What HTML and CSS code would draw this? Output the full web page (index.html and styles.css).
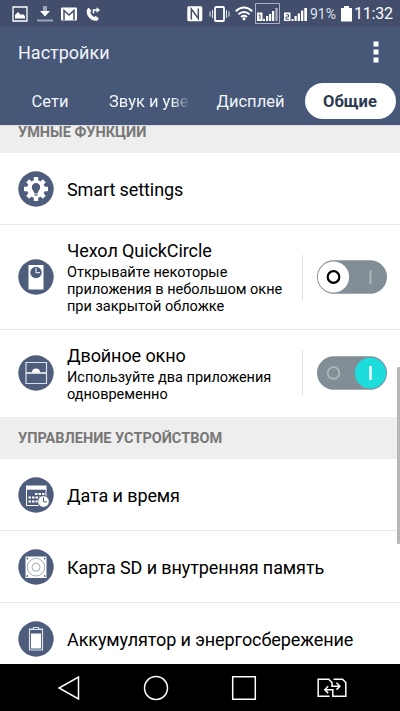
FILE: index.html
```html
<!DOCTYPE html>
<html lang="ru">
<head>
<meta charset="utf-8">
<title>Настройки</title>
<link rel="stylesheet" href="styles.css">
</head>
<body>
<div class="screen">
  <div class="status">
    <div class="status-left">
      <svg width="16" height="16" viewBox="0 0 16 16"><path d="M1 1h14v14H1z" fill="none" stroke="#fff" stroke-width="1.3"/><path d="M3 12.5V9l3-3 3 3 1.5-1 2.5 2v2.5z" fill="#fff"/></svg>
      <svg width="16" height="16" viewBox="0 0 16 16"><path d="M6 0h4v5H6z" fill="#9ba4b8"/><path d="M3 5h10l-5 5.500z" fill="#fff"/><path d="M0 13.500h16v2H0z" fill="#9ba4b8"/></svg>
      <svg width="16" height="16" viewBox="0 0 16 16"><rect y="1.500" width="16" height="13" rx="1" fill="#fff"/><path d="M3 14V4.500l5 4.500 5-4.500V14" fill="none" stroke="#434e6c" stroke-width="1.500"/></svg>
      <svg width="14" height="16" viewBox="0 0 14 16"><path d="M2.800 1.700C-.8 4 .8 9.400 3.500 12s5.700 3.500 8.300 2.200l1-1.600-2.900-2.700-1.800 1C6 10 4.500 8 4.300 6.100L5.500 5z" fill="#fff"/><path d="M7.500 7.500V4h3.500" fill="none" stroke="#fff" stroke-width="1.500"/><path d="M10.500 1.200l3.500 2.800-3.500 2.800z" fill="#fff"/></svg>
    </div>
    <div class="status-right">
      <svg width="16" height="16" viewBox="0 0 16 16"><rect x=".3" y=".3" width="15" height="15" rx="1.500" fill="#fff"/><path d="M4.300 13.500V3l7 9.500V2.500" fill="none" stroke="#434e6c" stroke-width="1.500"/></svg>
      <svg class="vibrate" width="21" height="16" viewBox="0 0 21 16"><rect x="6" y="1" width="9" height="14" rx="1" fill="none" stroke="#fff" stroke-width="1.800"/><path d="M3.500 4v8M1 5.500v5M17.500 4v8M20 5.500v5" stroke="#d8dce6" stroke-width="1.100"/></svg>
      <svg class="wifi" width="18" height="15" viewBox="0 0 18 15"><g fill="none" stroke="#fff" stroke-width="1.900"><path d="M.7 5.200q8.300-7.200 16.600 0M3.400 8.200q5.600-4.600 11.200 0M6 11q3-2.300 6 0"/></g><circle cx="9" cy="12.800" r="1.500" fill="#fff"/></svg>
      <svg class="sim1" width="25" height="21" viewBox="0 0 25 21"><path d="M.5.500h24v20H.5z" fill="none" stroke="#aab2c3"/><path d="M2 9.500h5.500v8.500H2z" fill="#fff"/><path d="M3.500 12h1.500V16.500" fill="none" stroke="#434e6c"/><path d="M8 16h2v2H8zM11 13h2.200v5H11zM14 11h2.200v7H14zM17 8h2.200v10H17z" fill="#fff"/><path d="M20.300 5h2.400v13h-2.400z" fill="#a3abbd"/></svg>
      <svg class="sim2" width="24" height="21" viewBox="0 0 24 21"><path d="M0 9.500h6.500v8.500H0z" fill="#fff"/><path d="M2 11.700h2.500v2.300H2v2.300h3" fill="none" stroke="#434e6c"/><path d="M7.500 16h2v2h-2zM10.500 13h2.200v5h-2.200zM13.700 10.500h2.300v7.500h-2.300zM17 7.500h2.300V18H17zM20.300 5H23v13h-2.700z" fill="#fff"/></svg>
      <span class="percent">91%</span>
      <svg class="battery" width="11" height="16" viewBox="0 0 11 16"><path d="M3 0h5v2h3v13.500H0V2h3z" fill="#fff"/></svg>
      <span class="clock">11:32</span>
    </div>
  </div>
  <header class="header">
    <h1>Настройки</h1>
    <svg class="more" width="6" height="22" viewBox="0 0 6 22"><path d="M.5.500h5v5h-5zM.5 8.500h5v5h-5zM.5 16.500h5v5h-5z" fill="#fff"/></svg>
  </header>
  <nav class="tabs">
    <div class="tab"><span>Сети</span></div>
    <div class="tab"><span>Звук и увед</span></div>
    <div class="tab"><span>Дисплей</span></div>
    <div class="tab active"><span>Общие</span></div>
  </nav>
  <main class="list">
    <h2 class="section first"><span>УМНЫЕ ФУНКЦИИ</span></h2>
    <div class="row">
      <svg class="icon" viewBox="0 0 36 36"><circle cx="18" cy="18" r="17.700" fill="#4f5d7d"/><circle cx="18" cy="18" r="9" fill="#fff"/><g stroke="#fff" stroke-width="4.400"><path d="M18 6v24M6 18h24M9.700 9.700l16.600 16.600M26.300 9.700L9.700 26.300"/></g><path d="M18 12a4.300 4.300 0 0 0-4.200 4.500c0 2.500 2.300 3 2.500 6h3.400c.2-3 2.500-3.500 2.500-6a4.300 4.300 0 0 0-4.200-4.500z" fill="#4f5d7d"/><path d="M16.500 24h3" stroke="#4f5d7d" stroke-width="1.300"/></svg>
      <div class="text"><div class="title">Smart settings</div></div>
    </div>
    <div class="row tall">
      <svg class="icon" viewBox="0 0 36 36"><circle cx="18" cy="18" r="17.700" fill="#4f5d7d"/><path d="M10.500 6h15v24.500h-15z" fill="#fff"/><circle cx="18" cy="13.500" r="5.700" fill="#4f5d7d"/><path d="M18 9v4.700h4" fill="none" stroke="#dce0e8" stroke-width="1.200"/></svg>
      <div class="text"><div class="title">Чехол QuickCircle</div><p><span>Открывайте некоторые</span><br><span>приложения в небольшом окне</span><br><span>при закрытой обложке</span></p></div>
      <div class="switch-wrap"><svg width="70" height="34" viewBox="0 0 70 34"><rect y=".3" width="70" height="33.400" rx="16.700" fill="#818e96"/><circle cx="16.500" cy="17" r="15.600" fill="#fff"/><circle cx="16.500" cy="17" r="5.800" fill="none" stroke="#000" stroke-width="2.200"/><path d="M53.500 10v14" stroke="#adb6bb" stroke-width="2"/></svg></div>
    </div>
    <div class="row dual">
      <svg class="icon" viewBox="0 0 36 36"><circle cx="18" cy="18" r="17.700" fill="#4f5d7d"/><path d="M8 7.500h20.500v21H8z" fill="none" stroke="#d9deea" stroke-width="1.200"/><path d="M14 17.500a4 4 0 0 1 8 0z" fill="#fff"/><path d="M8 18h20.500" stroke="#fff" stroke-width="1.500"/></svg>
      <div class="text"><div class="title">Двойное окно</div><p><span>Используйте два приложения</span><br><span>одновременно</span></p></div>
      <div class="switch-wrap"><svg width="70" height="34" viewBox="0 0 70 34"><rect y=".3" width="70" height="33.400" rx="16.700" fill="#818e96"/><circle cx="16.500" cy="17" r="5.800" fill="none" stroke="#b0b8bd" stroke-width="1.800"/><circle cx="53.500" cy="17" r="15.600" fill="#1edcdc"/><path d="M53.500 10v14" stroke="#fff" stroke-width="2.400"/></svg></div>
    </div>
    <h2 class="section"><span>УПРАВЛЕНИЕ УСТРОЙСТВОМ</span></h2>
    <div class="row">
      <svg class="icon" viewBox="0 0 36 36"><circle cx="18" cy="18" r="17.700" fill="#4f5d7d"/><path d="M8 8.500h20.500v4.200H8z" fill="#fff"/><path d="M8.500 12v16.500h12M28 12v8" fill="none" stroke="#fff"/><path d="M17 17h10M10.500 20.500H24M10.500 24.500H20" stroke="#fff" stroke-width="2.200" stroke-dasharray="2.500 1"/><circle cx="25.500" cy="24.500" r="5.700" fill="#fff" stroke="#4f5d7d" stroke-width=".7"/><path d="M25.500 20.500v4.300H29" fill="none" stroke="#4f5d7d"/></svg>
      <div class="text"><div class="title">Дата и время</div></div>
    </div>
    <div class="row">
      <svg class="icon" viewBox="0 0 36 36"><circle cx="18" cy="18" r="17.700" fill="#4f5d7d"/><path d="M7.500 7.500h21v21.500h-21z" fill="#fff"/><g fill="none" stroke="#8b94a8" stroke-width=".8"><circle cx="18" cy="18.200" r="8.800"/><circle cx="18" cy="18.200" r="4"/></g><path d="M8.500 9.500H10M26 9.500h1.500M8.500 27H10M26 27h1.500" stroke="#4f5d7d" stroke-width="1.300"/></svg>
      <div class="text"><div class="title">Карта SD и внутренняя память</div></div>
    </div>
    <div class="row">
      <svg class="icon" viewBox="0 0 36 36"><circle cx="18" cy="18" r="17.700" fill="#4f5d7d"/><path d="M15.500 8V6.500h5V8h4v21H11.500V8z" fill="none" stroke="#dce1eb" stroke-width="1.200"/><path d="M13 12.500h10v15H13z" fill="#fff"/><path d="M12 8.500h12" stroke="#dce1eb"/></svg>
      <div class="text"><div class="title">Аккумулятор и энергосбережение</div></div>
    </div>
    <div class="scrollbar"></div>
  </main>
  <footer class="navbar">
    <svg width="24" height="26" viewBox="0 0 24 26"><path d="M21.500 2v22L2 13z" fill="none" stroke="#fff" stroke-width="1.500"/></svg>
    <svg width="26" height="26" viewBox="0 0 26 26"><circle cx="13" cy="13" r="11.500" fill="none" stroke="#fff" stroke-width="1.500"/></svg>
    <svg width="26" height="26" viewBox="0 0 26 26"><path d="M1.700 1.700h22.600v22.600H1.700z" fill="none" stroke="#fff" stroke-width="1.500"/></svg>
    <svg width="30" height="20" viewBox="0 0 30 20"><g fill="none" stroke="#fff" stroke-width="1.500"><path d="M12.500 18.200H1.200V1.200h10.500L15 4.500v3.700h7.500M19.500 4.800l3.400 3.400-3.400 3.400"/><path d="M16.500 1.200h9l3.300 3.300v13.700h-13V11.700H8.300M11.200 8.300l-3.400 3.400 3.400 3.400"/></g></svg>
  </footer>
</div>
</body>
</html>
```
FILE: styles.css
```css
* { box-sizing: border-box; }
body { margin: 0; font-family: Roboto, "Noto Sans", sans-serif; background: #fff; }
svg { display: block; flex: none; }
h1, h2, p { margin: 0; font-weight: 400; }
span { white-space: nowrap; }
.screen { width: 400px; height: 711px; display: flex; flex-direction: column; overflow: hidden; }
.status { height: 27px; flex: none; background: #434e6c; color: #fff; display: flex; justify-content: space-between; align-items: center; padding: 0 7px 0 12px; }
.status-left { display: flex; gap: 8.700px; }
.status-right { display: flex; align-items: center; }
.vibrate { margin-left: 6px; }
.wifi { margin-left: 5px; }
.sim1 { margin-left: 2px; }
.sim2 { margin-left: 4px; }
.percent { width: 28px; margin-left: 2px; font-size: 14px; color: #dfe3ec; }
.battery { margin: 0 2px 0 3px; }
.clock { width: 39px; font-size: 16px; letter-spacing: -.2px; }
.header { height: 50px; flex: none; background: #465777; display: flex; align-items: center; justify-content: space-between; padding: 0 21px 0 18px; }
h1 { font-size: 18px; line-height: 22px; color: #f2f5fa; padding-top: 2px; }
.tabs { height: 48px; flex: none; background: #465777; color: #f2f5fa; display: grid; grid-template-columns: 100px 99px 103px 98px; font-size: 16.500px; }
.tab { height: 36px; margin-top: 6px; display: flex; align-items: center; justify-content: center; overflow: hidden; }
.tab:nth-child(2) { justify-content: flex-start; margin-left: 9px; margin-right: 9px; -webkit-mask-image: linear-gradient(90deg, #000 78%, transparent); mask-image: linear-gradient(90deg, #000 78%, transparent); }
.tab.active { background: #fff; border-radius: 18px; color: #2b3950; font-weight: 700; margin-left: 3px; margin-right: 4px; padding-right: 1px; }
.list { flex: 1; min-height: 0; position: relative; overflow: hidden; }
.section { height: 42px; background: #eee; color: #777; font-size: 14.500px; font-weight: 700; display: flex; align-items: center; padding: 1px 18px 0; }
.section.first { height: 28px; align-items: flex-start; padding-top: 0; line-height: 13px; border-top: 1px solid #dcdfe4; }
.row { height: 72px; border-bottom: 1px solid #e9e9e9; display: flex; align-items: center; padding: 0 13px 0 18px; }
.row.tall { height: 105px; }
.row.dual { height: 87px; border-bottom: 0; padding-bottom: 2px; }
.icon { width: 36px; height: 36px; margin-right: 13px; }
.text { flex: 1; color: #000; white-space: nowrap; }
.title { font-size: 18px; line-height: 22px; padding-top: 2px; letter-spacing: -.09px; }
.text p { font-size: 14.500px; line-height: 17px; margin-top: 2px; padding-bottom: 1px; }
.dual .title { padding-top: 3px; }
.dual p { padding-bottom: 0; }
.switch-wrap { height: 45px; border-left: 1px solid #ddd; padding-left: 14px; display: flex; align-items: center; }
.scrollbar { position: absolute; right: 0; top: 242px; width: 3px; height: 177px; background: #b7b7b7; border-radius: 1px; }
.navbar { height: 47px; flex: none; background: #000; display: grid; grid-template-columns: 86px 88px 86px 30px; align-items: center; padding-left: 57px; }
.navbar svg:nth-child(3) { margin-left: 0; }
```
